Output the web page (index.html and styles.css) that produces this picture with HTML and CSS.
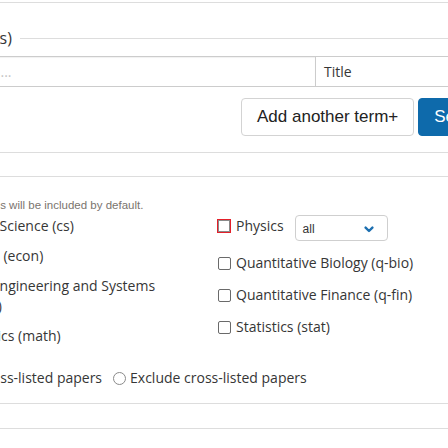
FILE: index.html
```html
<!DOCTYPE html>
<html lang="en">
<head>
<meta charset="utf-8">
<title>Advanced Search</title>
<link rel="stylesheet" href="styles.css">
</head>
<body>
<div class="page">
  <div class="rule rule-top"></div>

  <div class="legend-row">
    <span class="legend">Search term(s)</span>
    <span class="legend-line"></span>
  </div>

  <div class="term-row">
    <input class="term-input" type="text" placeholder="Search term...">
    <div class="term-field">Title</div>
  </div>

  <div class="button-row">
    <button class="btn btn-add" type="button">Add another term+</button>
    <button class="btn btn-search" type="button">Search</button>
  </div>

  <div class="rule rule-a"></div>
  <div class="rule rule-b"></div>

  <p class="help">All classifications will be included by default.</p>

  <div class="subjects">
    <div class="col col-left">
      <label class="check"><input type="checkbox"><span>Computer Science (cs)</span></label>
      <label class="check"><input type="checkbox"><span>Economics (econ)</span></label>
      <label class="check-wrap"><input type="checkbox">Electrical Engineering and Systems Science (eess)</label>
      <label class="check"><input type="checkbox"><span>Mathematics (math)</span></label>
    </div>
    <div class="col col-right">
      <div class="physics-row">
        <label class="check"><input class="invalid" type="checkbox"><span>Physics</span></label>
        <div class="mini-select">
          <span>all</span>
          <svg class="chev" width="10" height="7" viewBox="0 0 10 7"><polyline points="1.6,1.6 5,5 8.4,1.6" fill="none" stroke="#1d6fb0" stroke-width="2.4" stroke-linecap="round" stroke-linejoin="round"/></svg>
        </div>
      </div>
      <label class="check"><input type="checkbox"><span>Quantitative Biology (q-bio)</span></label>
      <label class="check"><input type="checkbox"><span>Quantitative Finance (q-fin)</span></label>
      <label class="check"><input type="checkbox"><span>Statistics (stat)</span></label>
    </div>
  </div>

  <div class="cross">
    <label class="check"><input type="radio" name="cross" checked><span>Include cross-listed papers</span></label>
    <label class="check exclude"><input type="radio" name="cross"><span>Exclude cross-listed papers</span></label>
  </div>

  <div class="rule rule-c"></div>
  <div class="rule rule-d"></div>
</div>
</body>
</html>
```

FILE: styles.css
```css
html, body {
  margin: 0;
  padding: 0;
  background: #fff;
  overflow: hidden;
}

body {
  width: 448px;
  height: 448px;
  font-family: "Open Sans", "Liberation Sans", sans-serif;
  color: #363636;
}

.page {
  margin-left: -100px;
  width: 660px;
}

.rule {
  border-top: 1px solid #dddddd;
}

.rule-top { margin-top: 2px; }

.legend-row {
  display: flex;
  align-items: center;
  height: 24px;
  margin-top: 23px;
  padding-left: 4px;
}

.legend {
  font-size: 16px;
  line-height: 24px;
  color: #363636;
}

.legend-line {
  flex: 1;
  margin-left: 8px;
  border-top: 1px solid #dddddd;
}

.term-row {
  display: flex;
  margin-top: 6px;
  height: 31px;
}

.term-input {
  box-sizing: border-box;
  width: 415px;
  height: 31px;
  margin: 0;
  padding: 0 0 0 20px;
  border: 1px solid #cccccc;
  border-right: none;
  box-shadow: inset 0 1px 1px rgba(0, 0, 0, 0.06);
  font-family: "Open Sans", sans-serif;
  font-size: 14px;
  color: #363636;
  outline: none;
}

.term-input::placeholder {
  color: #c4c4c4;
}

.term-field {
  box-sizing: border-box;
  flex: 1;
  height: 31px;
  border: 1px solid #cccccc;
  padding-left: 8px;
  font-size: 14px;
  line-height: 29px;
  color: #363636;
}

.button-row {
  display: flex;
  margin-top: 11px;
  margin-left: 341px;
  gap: 4px;
}

.btn {
  box-sizing: border-box;
  flex: none;
  height: 38px;
  padding: 0 15px;
  border: 1px solid #d3d3d3;
  border-radius: 4px;
  font-family: "Liberation Sans", Arial, sans-serif;
  font-size: 17px;
  background: #fff;
  color: #222;
  white-space: nowrap;
}

.btn-search {
  background: #0e6aab;
  border-color: #0e6aab;
  color: #fff;
}

.rule-a { margin-top: 16px; }
.rule-b { margin-top: 23px; }

.help {
  margin: 21px 0 0 19px;
  font-family: "Liberation Sans", Arial, sans-serif;
  font-size: 11.5px;
  line-height: 14px;
  color: #7a746e;
  white-space: nowrap;
}

.subjects {
  display: grid;
  grid-template-columns: 270px 250px;
  column-gap: 36px;
  margin-top: 4px;
  padding-left: 12px;
  align-items: start;
}

.col {
  display: flex;
  flex-direction: column;
}

.col-left { gap: 10px; }
.col-right { gap: 12px; }

input[type="checkbox"],
input[type="radio"] {
  appearance: none;
  -webkit-appearance: none;
  box-sizing: border-box;
  flex: none;
  width: 13px;
  height: 13px;
  margin: 0;
  border: 1px solid #6a6a6a;
  border-radius: 2px;
  background: #fff;
}

input[type="radio"] {
  border-radius: 50%;
  border-color: #8a8a8a;
}

input[type="radio"]:checked {
  background: radial-gradient(circle, #0075ff 0 3px, #fff 3.5px);
  border-color: #0075ff;
}

input.invalid {
  width: 14px;
  height: 14px;
  margin-left: -1px;
  border: 1px solid #e3202a;
  border-radius: 0;
  box-shadow: inset 0 0 0 1px #8a8a8a;
}

.check {
  display: flex;
  align-items: center;
  gap: 5px;
  font-size: 14px;
  line-height: 20px;
  color: #363636;
}

.check-wrap {
  display: block;
  font-size: 14px;
  line-height: 20px;
  color: #363636;
}

.check-wrap input[type="checkbox"] {
  vertical-align: -2px;
  margin-right: 5px;
}

.physics-row {
  display: flex;
  align-items: flex-start;
}

.mini-select {
  box-sizing: border-box;
  display: flex;
  align-items: center;
  justify-content: space-between;
  width: 93px;
  height: 26px;
  margin: -1px 0 0 11px;
  padding: 2px 13px 0 7px;
  border: 1px solid #cfcfcf;
  border-radius: 4px;
  font-family: "Liberation Sans", Arial, sans-serif;
  font-size: 12px;
  color: #333;
}

.chev {
  display: block;
}

.cross {
  display: flex;
  margin-top: 22px;
  padding-left: 10px;
}

.exclude {
  margin-left: 11px;
  gap: 4px;
}

.rule-c { margin-top: 15px; }
.rule-d { margin-top: 24px; }
```
